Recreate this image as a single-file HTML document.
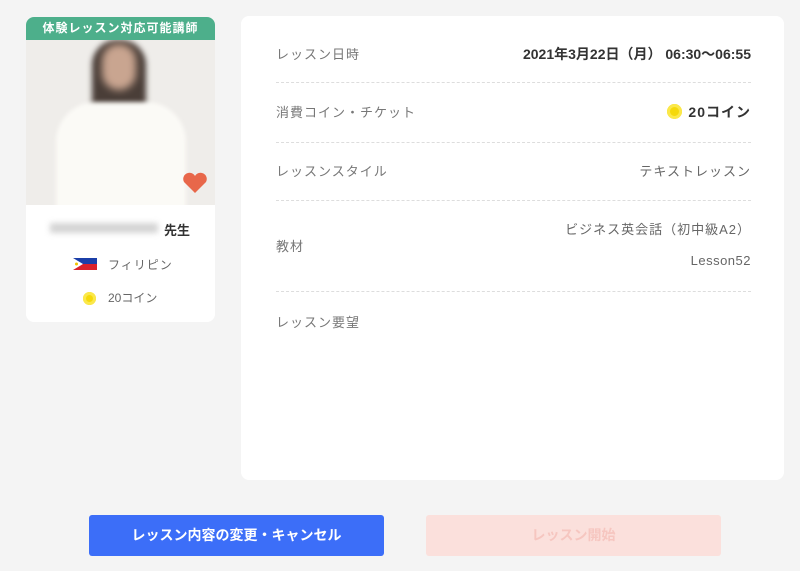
<!DOCTYPE html>
<html><head><meta charset="utf-8"><style>
body{margin:0;width:800px;height:571px;background:#f4f4f4;font-family:"Liberation Sans","Noto Sans CJK JP",sans-serif;position:relative;overflow:hidden;color:#555}
.a{position:absolute}
.card{left:26px;top:17px;width:189px;height:305px;background:#fff;border-radius:8px;overflow:hidden}
.tag{left:0;top:0;width:189px;height:23px;background:#4daf8b;color:#fff;font-size:12px;font-weight:bold;text-align:center;line-height:23px;letter-spacing:1px}
.photo{left:0;top:23px;width:189px;height:165px;background:#efedea;overflow:hidden}
.panel{left:241px;top:16px;width:543px;height:464px;background:#fff;border-radius:8px}
.lab{left:35px;font-size:13px;color:#777;letter-spacing:1px}
.val{right:33px;font-size:13px;color:#666;text-align:right;letter-spacing:1px}
.hr{left:35px;width:475px;border-top:1px dashed #ddd;height:0}
.coin{display:inline-block;width:13px;height:13px;border-radius:50%;background:#f5d90a;box-shadow:inset 0 0 0 3px #fbe84a;vertical-align:-2px}
.btn{top:515px;width:295px;height:41px;border-radius:3px;font-size:14px;text-align:center;line-height:41px;font-weight:bold}
</style></head><body>
<div class="a card">
 <div class="a tag">体験レッスン対応可能講師</div>
 <div class="a photo">
  <div class="a" style="left:66px;top:0;width:54px;height:75px;background:#4a3e38;border-radius:25px 25px 10px 10px;filter:blur(3px)"></div>
  <div class="a" style="left:76px;top:4px;width:34px;height:46px;background:#c9a590;border-radius:17px;filter:blur(4px)"></div>
  <div class="a" style="left:30px;top:62px;width:130px;height:120px;background:#fbfaf6;border-radius:40px 40px 0 0;filter:blur(2px)"></div>
  <svg class="a" style="left:156px;top:132px" width="26" height="22" viewBox="0 0 26 22"><path d="M13 21 L2 10 A6 6 0 0 1 13 4 A6 6 0 0 1 24 10 Z" fill="#e8674a"/></svg>
 </div>
 <div class="a" style="left:24px;top:206px;width:108px;height:10px;background:#d4d4d4;filter:blur(3px)"></div>
 <div class="a" style="left:138px;top:203px;font-size:13px;font-weight:bold;color:#333">先生</div>
 <div class="a" style="left:47px;top:241px;width:24px;height:12px;background:linear-gradient(#1b3fa8 50%,#d9212b 50%)"><svg width="24" height="12" style="display:block"><path d="M0 0 L10 6 L0 12Z" fill="#fff"/><circle cx="3.5" cy="6" r="1.5" fill="#f2c500"/></svg></div>
 <div class="a" style="left:82px;top:239px;font-size:12px;color:#666;letter-spacing:1px">フィリピン</div>
 <div class="a" style="left:57px;top:273px"><span class="coin"></span></div>
 <div class="a" style="left:82px;top:272px;font-size:12px;color:#666">20コイン</div>
</div>
<div class="a panel">
 <div class="a lab" style="top:28px">レッスン日時</div>
 <div class="a val" style="top:28px;font-weight:bold;color:#333;letter-spacing:0;font-size:14px">2021年3月22日（月） 06:30〜06:55</div>
 <div class="a hr" style="top:66px"></div>
 <div class="a lab" style="top:86px">消費コイン・チケット</div>
 <div class="a val" style="top:86px;font-weight:bold;color:#333;font-size:14px"><span class="coin" style="width:15px;height:15px;margin-right:6px"></span>20コイン</div>
 <div class="a hr" style="top:126px"></div>
 <div class="a lab" style="top:145px">レッスンスタイル</div>
 <div class="a val" style="top:145px">テキストレッスン</div>
 <div class="a hr" style="top:184px"></div>
 <div class="a lab" style="top:220px">教材</div>
 <div class="a val" style="top:203px">ビジネス英会話（初中級A2）</div>
 <div class="a val" style="top:237px;letter-spacing:0.5px">Lesson52</div>
 <div class="a hr" style="top:275px"></div>
 <div class="a lab" style="top:296px">レッスン要望</div>
</div>
<div class="a btn" style="left:89px;background:#3c6ef8;color:#fff">レッスン内容の変更・キャンセル</div>
<div class="a btn" style="left:426px;background:#fbe0dc;color:#f6c6c0">レッスン開始</div>
</body></html>
